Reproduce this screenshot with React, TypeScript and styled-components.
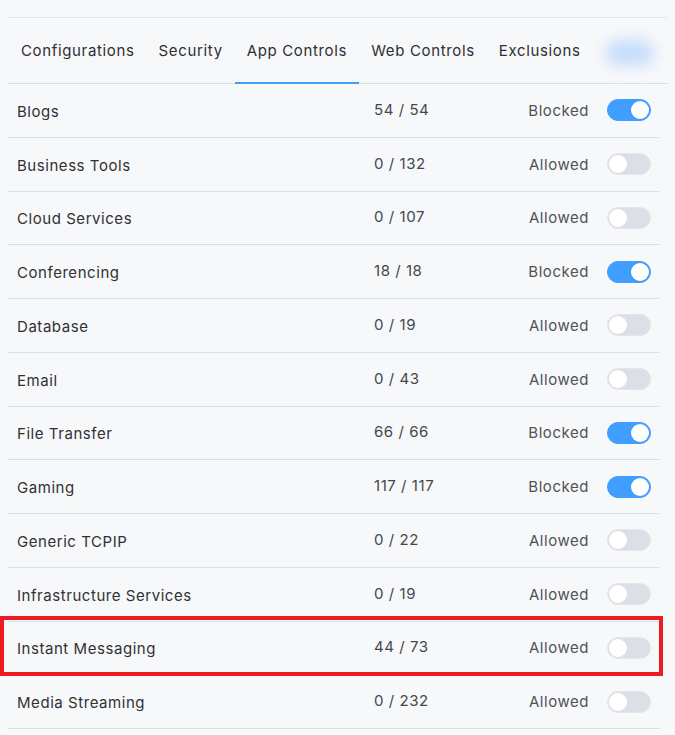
import React from "react";
import styled, { createGlobalStyle } from "styled-components";

const Global = createGlobalStyle`
  html, body { margin: 0; padding: 0; background: #f7f8fa; }
  body { font-family: Inter, "Noto Sans", sans-serif; -webkit-font-smoothing: antialiased; }
`;

const Page = styled.div`
  padding: 17px 8px 0 8px;
  width: 675px;
  box-sizing: border-box;
`;

const TabBar = styled.div`
  position: relative;
  display: flex;
  align-items: stretch;
  height: 67px;
  width: 659px;
  box-sizing: border-box;
  border-top: 1px solid #e2e4e9;
  border-bottom: 1px solid #dcdfe6;
  padding-left: 1px;
`;

const Tab = styled.div<{ $active?: boolean }>`
  display: flex;
  align-items: center;
  padding: 0 12px;
  font-size: 15px;
  letter-spacing: 0.65px;
  color: #2e2f33;
  position: relative;
  white-space: nowrap;
  &::after {
    content: "";
    position: absolute;
    left: 0;
    right: 0;
    bottom: -1px;
    height: 2px;
    background: ${(p) => (p.$active ? "#409eff" : "transparent")};
  }
`;

const BlurBlob = styled.div`
  position: absolute;
  left: 598px;
  top: 22px;
  width: 48px;
  height: 26px;
  border-radius: 13px;
  background: #c6defa;
  filter: blur(7px);
`;

const List = styled.div`
  width: 651px;
`;

const Row = styled.div`
  position: relative;
  display: grid;
  grid-template-columns: 357px 1fr auto 44px;
  align-items: center;
  height: 53.75px;
  box-sizing: border-box;
  padding: 0 8px 0 9px;
  border-bottom: 1px solid #dcdfe6;
  font-size: 15px;
  letter-spacing: 0.55px;
`;

const Name = styled.div`
  color: #303133;
  padding-top: 2px;
`;

const Count = styled.div`
  color: #45474c;
  padding-bottom: 2px;
`;

const Status = styled.div`
  color: #505257;
  margin-right: 18px;
`;

const Switch = styled.div<{ $on: boolean }>`
  position: relative;
  width: 44px;
  height: 22px;
  border-radius: 11px;
  box-sizing: border-box;
  background: ${(p) => (p.$on ? "#409eff" : "#dcdfe6")};
  border: 1px solid ${(p) => (p.$on ? "#409eff" : "#e4e6ec")};
  &::after {
    content: "";
    position: absolute;
    top: 1px;
    left: ${(p) => (p.$on ? "23px" : "1px")};
    width: 18px;
    height: 18px;
    border-radius: 50%;
    background: #fff;
  }
`;

const Highlight = styled.div`
  position: absolute;
  left: -8px;
  right: -4px;
  top: -6px;
  bottom: -2px;
  border: 4.5px solid #ec1c24;
  pointer-events: none;
`;

const rows = [
  ["Blogs", "54 / 54", true],
  ["Business Tools", "0 / 132", false],
  ["Cloud Services", "0 / 107", false],
  ["Conferencing", "18 / 18", true],
  ["Database", "0 / 19", false],
  ["Email", "0 / 43", false],
  ["File Transfer", "66 / 66", true],
  ["Gaming", "117 / 117", true],
  ["Generic TCPIP", "0 / 22", false],
  ["Infrastructure Services", "0 / 19", false],
  ["Instant Messaging", "44 / 73", false],
  ["Media Streaming", "0 / 232", false],
] as const;

const tabs = ["Configurations", "Security", "App Controls", "Web Controls", "Exclusions"];

export default function App() {
  return (
    <>
      <Global />
      <Page>
        <TabBar>
          {tabs.map((t) => (
            <Tab key={t} $active={t === "App Controls"}>
              {t}
            </Tab>
          ))}
          <BlurBlob />
        </TabBar>
        <List>
          {rows.map(([name, count, on]) => (
            <Row key={name}>
              <Name>{name}</Name>
              <Count>{count}</Count>
              <Status>{on ? "Blocked" : "Allowed"}</Status>
              <Switch $on={on} />
              {name === "Instant Messaging" && <Highlight />}
            </Row>
          ))}
        </List>
      </Page>
    </>
  );
}
